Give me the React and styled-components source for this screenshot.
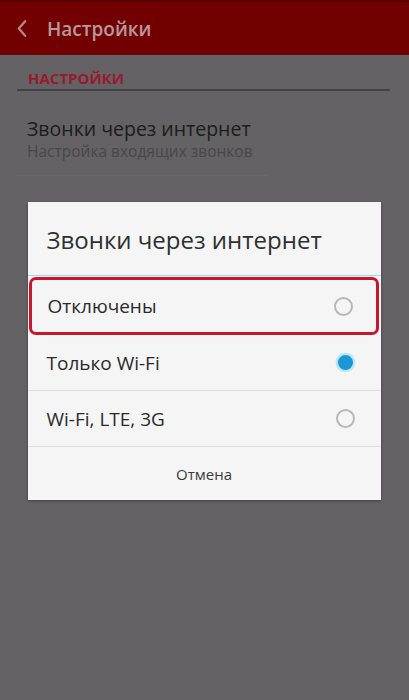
import React from 'react';
import styled, { createGlobalStyle } from 'styled-components';

const GlobalStyle = createGlobalStyle`
  html, body {
    margin: 0;
    padding: 0;
    background: #646264;
    font-family: "Open Sans", "Noto Sans", sans-serif;
  }
`;

const options = [
  { id: 'off', label: 'Отключены', highlighted: true },
  { id: 'wifi', label: 'Только Wi-Fi', checked: true },
  { id: 'all', label: 'Wi-Fi, LTE, 3G' },
];

function App() {
  return (
    <>
      <GlobalStyle />
      <Screen>
        <Toolbar>
          <BackIcon viewBox="0 0 12 20">
            <path d="M10 2 L3 10 L10 18" fill="none" stroke="#b08a8a" strokeWidth="2.4" strokeLinecap="round" strokeLinejoin="round" />
          </BackIcon>
          <ToolbarTitle>Настройки</ToolbarTitle>
        </Toolbar>
        <Content>
          <SectionLabel>НАСТРОЙКИ</SectionLabel>
          <SettingItem>
            <SettingTitle>Звонки через интернет</SettingTitle>
            <SettingSub>Настройка входящих звонков</SettingSub>
          </SettingItem>
        </Content>
        <Overlay>
          <Dialog>
            <DialogTitle>Звонки через интернет</DialogTitle>
            <OptionList>
              {options.map((o) => (
                <Option key={o.id} highlighted={o.highlighted}>
                  <OptionLabel>{o.label}</OptionLabel>
                  <Radio checked={o.checked} />
                </Option>
              ))}
            </OptionList>
            <CancelButton>Отмена</CancelButton>
          </Dialog>
        </Overlay>
      </Screen>
    </>
  );
}

const Screen = styled.div`
  width: 409px;
  height: 700px;
  position: relative;
  overflow: hidden;
  background: #646264;
`;

const Toolbar = styled.div`
  height: 55px;
  background: #720001;
  border-top: 2px solid #5a0000;
  box-sizing: border-box;
  display: flex;
  align-items: center;
  padding-left: 16px;
`;

const BackIcon = styled.svg`
  width: 11px;
  height: 19px;
  margin-right: 20px;
`;

const ToolbarTitle = styled.div`
  font-size: 19px;
  font-weight: 600;
  color: #b59a9b;
`;

const Content = styled.div`
  padding: 0 19px 0 17px;
`;

const SectionLabel = styled.div`
  font-size: 15px;
  font-weight: 700;
  color: #9a1a2c;
  padding: 14px 0 2px 11px;
  height: 18px;
  line-height: 18px;
  border-bottom: 2px solid #434243;
`;

const SettingItem = styled.div`
  padding: 25px 0 14px 10px;
  width: 240px;
  border-bottom: 1px solid #6a696a;
`;

const SettingTitle = styled.div`
  font-size: 19.5px;
  color: #1c1c1d;
  line-height: 25px;
`;

const SettingSub = styled.div`
  font-size: 15.5px;
  color: #484748;
  line-height: 20px;
`;

const Overlay = styled.div`
  position: absolute;
  inset: 0;
  display: flex;
  justify-content: center;
  padding-top: 202px;
`;

const Dialog = styled.div`
  width: 353px;
  height: 298px;
  margin-right: 1px;
  background: #f6f5f6;
  box-shadow: 0 1px 3px rgba(0, 0, 0, 0.35);
  display: flex;
  flex-direction: column;
`;

const DialogTitle = styled.div`
  height: 74px;
  box-sizing: border-box;
  padding: 21px 0 0 19px;
  font-size: 24px;
  color: #2f2f30;
  border-bottom: 1px solid #9fd8ee;
`;

const OptionList = styled.div`
  display: flex;
  flex-direction: column;
`;

const Option = styled.div`
  height: 56px;
  box-sizing: border-box;
  display: flex;
  align-items: center;
  justify-content: space-between;
  padding: 0 26px 0 19px;
  border-bottom: 1px solid #e0dfe0;
  ${(p) => p.highlighted && `
    border: 3px solid #c8162f;
    border-radius: 7px;
    margin: 1px 2px 0 1px;
    padding: 0 23px 0 16px;
    height: 58px;
  `}
`;

const OptionLabel = styled.div`
  font-size: 19px;
  color: #2a2a2b;
`;

const Radio = styled.div`
  width: 19px;
  height: 19px;
  border-radius: 50%;
  box-sizing: border-box;
  border: 2px solid ${(p) => (p.checked ? '#b9e2f3' : '#b8b7b8')};
  background: ${(p) => (p.checked ? '#1a98d5' : 'transparent')};
  box-shadow: ${(p) => (p.checked ? '0 0 0 1px #dff2fa' : 'none')};
`;

const CancelButton = styled.div`
  flex: 1;
  display: flex;
  align-items: center;
  justify-content: center;
  font-size: 15px;
  color: #3a3a3b;
`;

export default App;
